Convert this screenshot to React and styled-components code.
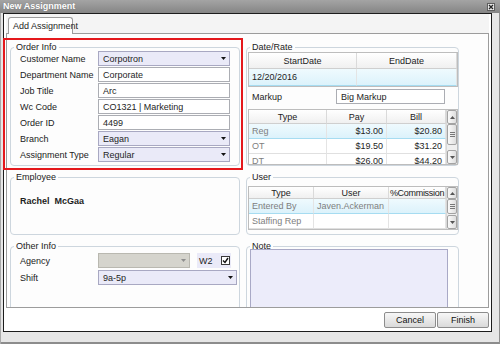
import { Fragment } from "react";
import styled, { createGlobalStyle } from "styled-components";

const GlobalStyle = createGlobalStyle`
  html, body {
    margin: 0;
    padding: 0;
    background: #fff;
  }
  body {
    font-family: "Liberation Sans", Arial, sans-serif;
    font-size: 9px;
    color: #1e1e1e;
  }
  * {
    box-sizing: border-box;
  }
`;

const Window = styled.div`
  position: relative;
  width: 500px;
  height: 344px;
  display: flex;
  flex-direction: column;
  background: #e6e6e6;
  box-shadow: inset 1px 0 #a9a9a9, inset -1px 0 #8f8f8f, inset 0 -2px #8c8c8c;
`;

const TitleBar = styled.div`
  flex: none;
  height: 13px;
  display: flex;
  align-items: center;
  justify-content: space-between;
  padding: 0 5px 0 3px;
  background: linear-gradient(#a4a4a4, #858585);
  color: #fff;
  font-weight: bold;
  line-height: 13px;
  text-shadow: 0 0 1px #6a6a6a;
`;

const CloseBox = styled.div`
  width: 8px;
  height: 8px;
  display: grid;
  place-items: center;
  border: 1px solid #5e5e5e;
  background: #e9e9e9;
`;

const Frame = styled.div`
  flex: none;
  height: 319px;
  margin: 0 8px 0 3px;
  display: flex;
  flex-direction: column;
  padding: 0 2px;
  border: 1px solid #1c1c1c;
  background: #fff;
`;

const TabStrip = styled.div`
  flex: none;
  height: 19px;
  display: flex;
  align-items: flex-end;
  padding-left: 2px;
  background: #f4f4f4;
`;

const Tab = styled.div`
  position: relative;
  z-index: 1;
  height: 17px;
  margin-bottom: -1px;
  width: 65px;
  display: flex;
  align-items: center;
  padding: 0 4px;
  border: 1px solid #9c9c9c;
  border-bottom: 0;
  border-radius: 3px 3px 0 0;
  background: #fff;
  white-space: nowrap;
`;

const TabPanel = styled.div`
  flex: none;
  height: 275px;
  overflow: hidden;
  padding: 8px 0 0 3px;
  border: 1px solid #9c9c9c;
  background: #fdfdfd;
`;

const Columns = styled.div`
  display: grid;
  grid-auto-flow: column;
  grid-template-columns: 230px 213px;
  grid-template-rows: 124px 63px 80px;
  column-gap: 6px;
  row-gap: 6px;
`;

const Group = styled.fieldset`
  margin: 0;
  min-width: 0;
  padding: ${({ $pad }) => $pad || "0 9px 4px 9px"};
  border: 1px solid #cdd6de;
  border-radius: 4px;
  display: flex;
  flex-direction: column;
`;

const Legend = styled.legend`
  padding: 0 2px;
  margin-left: ${({ $offset }) => $offset}px;
  line-height: 10px;
  color: #222;
`;

const Form = styled.div`
  display: grid;
  grid-template-columns: 78px auto;
  grid-auto-rows: 15px;
  row-gap: ${({ $gap }) => $gap}px;
  align-items: center;
  justify-items: start;
  margin-top: ${({ $top }) => $top}px;
`;

const FieldLabel = styled.span`
  white-space: nowrap;
  color: #222;
`;

const TextBox = styled.div`
  height: 15px;
  width: ${({ $w }) => $w}px;
  display: flex;
  align-items: center;
  justify-content: space-between;
  padding: 0 3px 0 4px;
  border: 1px solid #abadb3;
  background: #fff;
  white-space: nowrap;
  overflow: hidden;
`;

const ComboBox = styled(TextBox)`
  background: ${({ $disabled }) => ($disabled ? "#d5d4cd" : "#eaeaf8")};
  border-color: ${({ $disabled }) => ($disabled ? "#b9b8b0" : "#a8a8c2")};
`;

const InlineRow = styled.div`
  display: flex;
  align-items: center;
  gap: 7px;
`;

const CheckField = styled.div`
  width: 34px;
  height: 15px;
  display: flex;
  align-items: center;
  justify-content: space-between;
  padding: 0 1px 0 2px;
  background: #eaeaf8;
`;

const CheckBox = styled.div`
  width: 9px;
  height: 9px;
  display: grid;
  place-items: center;
  border: 1px solid #3a3a3a;
  background: #fff;
`;

const EmployeeName = styled.div`
  padding-top: 14px;
  line-height: 11px;
  font-weight: bold;
  white-space: pre;
`;

const DataGrid = styled.div`
  flex: none;
  display: flex;
  height: ${({ $h }) => $h}px;
  margin-top: ${({ $top }) => $top || 0}px;
  border: 1px solid #bdbdbd;
  background: #fff;
  overflow: hidden;
`;

const Table = styled.div`
  flex: 1;
  display: grid;
  grid-template-columns: ${({ $cols }) => $cols};
  grid-template-rows: ${({ $head }) => $head}px;
  grid-auto-rows: ${({ $row }) => $row}px;
  align-content: start;
`;

const HeadCell = styled.div`
  display: flex;
  align-items: center;
  justify-content: center;
  white-space: nowrap;
  letter-spacing: ${({ $tight }) => ($tight ? "-0.3px" : "normal")};
  background: linear-gradient(#ffffff, #f0f0f0);
  border-right: 1px solid #dadada;
  border-bottom: 1px solid #cfcfcf;
  color: #222;
`;

const Cell = styled.div`
  display: flex;
  align-items: center;
  justify-content: ${({ $right }) => ($right ? "flex-end" : "flex-start")};
  padding: 0 3px;
  white-space: nowrap;
  color: ${({ $muted }) => ($muted ? "#7e7e7e" : "#1e1e1e")};
  background: ${({ $selected }) =>
    $selected ? "linear-gradient(#effafe, #dcf2fb)" : "#fff"};
  border-right: 1px solid #e4e4e4;
  border-bottom: 1px solid ${({ $selected }) => ($selected ? "#a6dcf1" : "#e0e0e0")};
`;

const ScrollBar = styled.div`
  flex: none;
  width: 11px;
  display: flex;
  flex-direction: column;
  background: #efefef;
  border-left: 1px solid #d8d8d8;
`;

const ScrollButton = styled.div`
  flex: none;
  height: ${({ $h }) => $h}px;
  display: grid;
  place-items: center;
  border: 1px solid #a3a3a3;
  border-radius: 2px;
  background: linear-gradient(90deg, #fafafa, #dedede);
`;

const ScrollThumb = styled(ScrollButton)`
  gap: 1px;
  align-content: center;
`;

const Grip = styled.span`
  display: block;
  width: 5px;
  height: 1px;
  background: #777;
`;

const Track = styled.div`
  flex: 1;
`;

const MarkupRow = styled.div`
  flex: none;
  display: flex;
  align-items: center;
  justify-content: space-between;
  height: 17px;
  margin-top: 1px;
  padding: 0 13px 0 4px;
`;

const NoteArea = styled.div`
  height: 70px;
  margin: -2px 10px 0 2px;
  border: 1px solid #a9a9c6;
  background: #ececfa;
`;

const ButtonBar = styled.div`
  flex: 1;
  display: flex;
  justify-content: flex-end;
  align-items: flex-start;
  gap: 1px;
  padding-top: 4px;
`;

const Button = styled.div`
  width: 52px;
  height: 16px;
  display: grid;
  place-items: center;
  border: 1px solid #8d8d8d;
  border-radius: 2px;
  background: linear-gradient(#f7f7f7, #dadada);
  color: #111;
`;

const Highlight = styled.div`
  position: absolute;
  left: 3px;
  top: 38px;
  width: 240px;
  height: 132px;
  border: 2px solid #e4181c;
  pointer-events: none;
`;

const Arrow = ({ color = "#111", dir = "down" }) => (
  <svg width="5" height="3" viewBox="0 0 5 3">
    <polygon
      points={dir === "down" ? "0,0 5,0 2.5,3" : "0,3 5,3 2.5,0"}
      fill={color}
    />
  </svg>
);

const Combo = ({ w, value, disabled }) => (
  <ComboBox $w={w} $disabled={disabled}>
    <span>{value}</span>
    <Arrow color={disabled ? "#8e8e8e" : "#111"} />
  </ComboBox>
);

const Scroll = ({ head, thumb }) => (
  <ScrollBar>
    <ScrollButton $h={head}>
      <Arrow dir="up" color="#555" />
    </ScrollButton>
    <ScrollThumb $h={thumb}>
      <Grip />
      <Grip />
      <Grip />
    </ScrollThumb>
    <Track />
    <ScrollButton $h={14}>
      <Arrow color="#555" />
    </ScrollButton>
  </ScrollBar>
);

const rates = [
  { type: "Reg", pay: "$13.00", bill: "$20.80" },
  { type: "OT", pay: "$19.50", bill: "$31.20" },
  { type: "DT", pay: "$26.00", bill: "$44.20" },
];

const users = [
  { type: "Entered By", user: "Javen.Ackerman" },
  { type: "Staffing Rep", user: "" },
];

export default function App() {
  return (
    <>
      <GlobalStyle />
      <Window>
        <TitleBar>
          <span>New Assignment</span>
          <CloseBox>
            <svg width="6" height="6" viewBox="0 0 6 6">
              <path d="M1 1L5 5M5 1L1 5" stroke="#222" strokeWidth="1.3" />
            </svg>
          </CloseBox>
        </TitleBar>
        <Frame>
          <TabStrip>
            <Tab>Add Assignment</Tab>
          </TabStrip>
          <TabPanel>
            <Columns>
              <Group>
                <Legend $offset={-6}>Order Info</Legend>
                <Form $gap={1} $top={-1}>
                  <FieldLabel>Customer Name</FieldLabel>
                  <Combo w={132} value="Corpotron" />
                  <FieldLabel>Department Name</FieldLabel>
                  <TextBox $w={132}>Corporate</TextBox>
                  <FieldLabel>Job Title</FieldLabel>
                  <TextBox $w={132}>Arc</TextBox>
                  <FieldLabel>Wc Code</FieldLabel>
                  <TextBox $w={132}>CO1321 | Marketing</TextBox>
                  <FieldLabel>Order ID</FieldLabel>
                  <TextBox $w={132}>4499</TextBox>
                  <FieldLabel>Branch</FieldLabel>
                  <Combo w={132} value="Eagan" />
                  <FieldLabel>Assignment Type</FieldLabel>
                  <Combo w={132} value="Regular" />
                </Form>
              </Group>
              <Group>
                <Legend $offset={-6}>Employee</Legend>
                <EmployeeName>{"Rachel  McGaa"}</EmployeeName>
              </Group>
              <Group>
                <Legend $offset={-6}>Other Info</Legend>
                <Form $gap={2} $top={2}>
                  <FieldLabel>Agency</FieldLabel>
                  <InlineRow>
                    <Combo w={92} value="" disabled />
                    <CheckField>
                      <span>W2</span>
                      <CheckBox>
                        <svg width="7" height="7" viewBox="0 0 7 7">
                          <path d="M1 3.5L3 5.5L6 1" stroke="#111" strokeWidth="1.4" fill="none" />
                        </svg>
                      </CheckBox>
                    </CheckField>
                  </InlineRow>
                  <FieldLabel>Shift</FieldLabel>
                  <Combo w={139} value="9a-5p" />
                </Form>
              </Group>

              <Group $pad="0 0 0 1px">
                <Legend $offset={2}>Date/Rate</Legend>
                <DataGrid $h={35}>
                  <Table $cols="108px 1fr" $head={16} $row={17}>
                    <HeadCell>StartDate</HeadCell>
                    <HeadCell>EndDate</HeadCell>
                    <Cell $selected>12/20/2016</Cell>
                    <Cell $selected />
                  </Table>
                </DataGrid>
                <MarkupRow>
                  <span>Markup</span>
                  <TextBox $w={109}>Big Markup</TextBox>
                </MarkupRow>
                <DataGrid $h={56} $top={4}>
                  <Table $cols="78px 60px 1fr" $head={14} $row={15}>
                    <HeadCell>Type</HeadCell>
                    <HeadCell>Pay</HeadCell>
                    <HeadCell>Bill</HeadCell>
                    {rates.map((r, i) => (
                      <Fragment key={r.type}>
                        <Cell $muted $selected={i === 0}>{r.type}</Cell>
                        <Cell $right $selected={i === 0}>{r.pay}</Cell>
                        <Cell $right $selected={i === 0}>{r.bill}</Cell>
                      </Fragment>
                    ))}
                  </Table>
                  <Scroll head={14} thumb={21} />
                </DataGrid>
              </Group>
              <Group $pad="0 0 0 1px">
                <Legend $offset={2}>User</Legend>
                <DataGrid $h={44} $top={4}>
                  <Table $cols="65px 75px 1fr" $head={12} $row={15}>
                    <HeadCell>Type</HeadCell>
                    <HeadCell>User</HeadCell>
                    <HeadCell $tight>%Commission</HeadCell>
                    {users.map((u, i) => (
                      <Fragment key={u.type}>
                        <Cell $muted $selected={i === 0}>{u.type}</Cell>
                        <Cell $muted $selected={i === 0}>{u.user}</Cell>
                        <Cell $selected={i === 0} />
                      </Fragment>
                    ))}
                  </Table>
                  <Scroll head={12} thumb={15} />
                </DataGrid>
              </Group>
              <Group $pad="0 0 0 1px">
                <Legend $offset={2}>Note</Legend>
                <NoteArea />
              </Group>
            </Columns>
          </TabPanel>
          <ButtonBar>
            <Button>Cancel</Button>
            <Button>Finish</Button>
          </ButtonBar>
        </Frame>
        <Highlight />
      </Window>
    </>
  );
}
